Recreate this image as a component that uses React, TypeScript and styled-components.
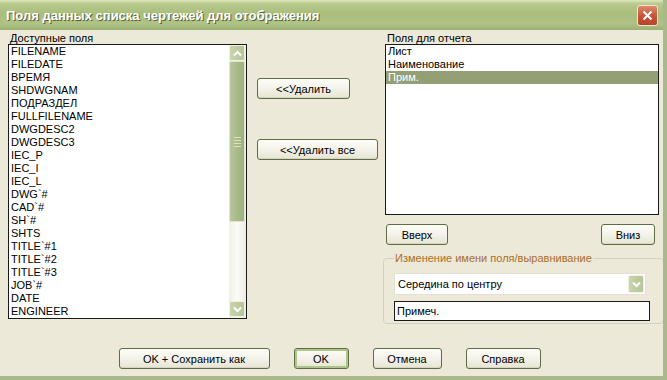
import React from 'react';
import styled, { createGlobalStyle } from 'styled-components';

// Поля, которые можно добавить в отчет
const availableFields = [
  'FILENAME', 'FILEDATE', 'ВРЕМЯ', 'SHDWGNAM', 'ПОДРАЗДЕЛ', 'FULLFILENAME',
  'DWGDESC2', 'DWGDESC3', 'IEC_P', 'IEC_I', 'IEC_L', 'DWG`#', 'CAD`#', 'SH`#',
  'SHTS', 'TITLE`#1', 'TITLE`#2', 'TITLE`#3', 'JOB`#', 'DATE', 'ENGINEER',
];

const reportFields = ['Лист', 'Наименование', 'Прим.'];

const GlobalStyle = createGlobalStyle`
  html, body {
    margin: 0;
    padding: 0;
    background: #ece9d8;
  }
  * {
    box-sizing: border-box;
  }
`;

const Window = styled.div`
  width: 667px;
  height: 380px;
  display: flex;
  flex-direction: column;
  background: #ece9d8;
  border-right: 4px solid #a9b98c;
  border-bottom: 4px solid #a9b98c;
  font-family: 'Liberation Sans', 'Noto Sans', sans-serif;
  font-size: 11px;
  color: #000;
  overflow: hidden;
`;

const TitleBar = styled.div`
  height: 30px;
  flex: none;
  display: flex;
  align-items: center;
  justify-content: space-between;
  padding: 0 5px 0 6px;
  background: linear-gradient(180deg, #dde8bd 0%, #b8ca8c 12%, #a9bd7c 45%, #b0c386 80%, #9cb072 100%);
`;

const Title = styled.span`
  color: #fff;
  font-size: 13px;
  font-weight: bold;
  text-shadow: 1px 1px 0 #55653a;
`;

const CloseButton = styled.div`
  width: 21px;
  height: 21px;
  border-radius: 3px;
  border: 1px solid #f3e3d6;
  background: linear-gradient(180deg, #dc8a6c 0%, #c8563a 50%, #b84428 100%);
  display: flex;
  align-items: center;
  justify-content: center;
`;

const Body = styled.div`
  display: flex;
  padding: 2px 0 0 8px;
`;

const Column = styled.div<{ $width: number }>`
  width: ${p => p.$width}px;
  flex: none;
  display: flex;
  flex-direction: column;
`;

const Label = styled.div`
  height: 12px;
  line-height: 12px;
  padding-left: 2px;
`;

const ListBox = styled.div<{ $height: number }>`
  height: ${p => p.$height}px;
  background: #fff;
  border: 1px solid #1a1a1a;
  display: flex;
  overflow: hidden;
`;

const Items = styled.div`
  flex: 1;
  display: flex;
  flex-direction: column;
`;

const Item = styled.div<{ $selected?: boolean }>`
  height: 13px;
  line-height: 13px;
  padding-left: 2px;
  white-space: nowrap;
  background: ${p => (p.$selected ? '#949f76' : 'transparent')};
  color: ${p => (p.$selected ? '#fff' : '#000')};
`;

const ScrollBar = styled.div`
  width: 17px;
  flex: none;
  display: flex;
  flex-direction: column;
  padding: 0 1px 1px 0;
  background: linear-gradient(90deg, #f1f0e6 0%, #fbfbf7 50%, #eeede2 100%);
`;

const ArrowButton = styled.div`
  width: 16px;
  height: 16px;
  flex: none;
  border: 1px solid #eef2e2;
  border-radius: 2px;
  background: linear-gradient(90deg, #c8d4aa 0%, #b7c598 100%);
  display: flex;
  align-items: center;
  justify-content: center;
`;

const Thumb = styled.div`
  height: 161px;
  border: 1px solid #dfe6cc;
  border-radius: 2px;
  background: linear-gradient(90deg, #b8c79a 0%, #a9b98a 50%, #9fb07e 100%);
  display: flex;
  flex-direction: column;
  align-items: center;
  justify-content: center;
  gap: 2px;
`;

const Grip = styled.div`
  width: 7px;
  height: 1px;
  background: #d9e2c3;
`;

const Track = styled.div`
  flex: 1;
`;

const MiddleColumn = styled(Column)`
  padding: 46px 0 0 10px;
  gap: 40px;
`;

const Button = styled.div<{ $width: number; $default?: boolean }>`
  width: ${p => p.$width}px;
  height: 21px;
  border: 1px solid #5f6c45;
  border-radius: 3px;
  background: linear-gradient(180deg, #fdfdf8 0%, #f4f3ea 50%, #e6e4d3 100%);
  box-shadow: ${p => (p.$default ? 'inset 0 0 0 2px #aec68a' : 'inset 0 -1px 0 #d8d5bf')};
  display: flex;
  align-items: center;
  justify-content: center;
  white-space: nowrap;
`;

const ButtonRow = styled.div`
  display: flex;
  justify-content: space-between;
  margin-top: 9px;
  padding: 0 4px 0 1px;
`;

const GroupBox = styled.fieldset`
  margin: 7px -1px 0 -2px;
  padding: 9px 13px 2px 10px;
  border: 1px solid #d3d2c0;
  border-radius: 4px;
  display: flex;
  flex-direction: column;
  gap: 6px;
`;

const Legend = styled.legend`
  padding: 0 1px;
  margin-left: 0;
  color: #a96d2c;
  line-height: 12px;
`;

const Select = styled.div`
  height: 22px;
  width: 252px;
  background: #fff;
  border: 1px solid #e2e1d3;
  display: flex;
  align-items: center;
  justify-content: space-between;
  padding: 0 1px 0 3px;
`;

const DropButton = styled(ArrowButton)`
  height: 18px;
`;

const TextInput = styled.div`
  height: 20px;
  width: 256px;
  background: #fff;
  border: 1px solid #1a1a1a;
  display: flex;
  align-items: center;
  padding-left: 2px;
`;

const Footer = styled.div`
  margin-top: auto;
  display: flex;
  justify-content: center;
  gap: 24px;
  padding: 0 4px 7px 0;
`;

const Chevron: React.FC<{ up?: boolean }> = ({ up }) => (
  <svg width="9" height="7" viewBox="0 0 9 7">
    <path
      d={up ? 'M1 5.5 L4.5 2 L8 5.5' : 'M1 1.5 L4.5 5 L8 1.5'}
      fill="none"
      stroke="#fff"
      strokeWidth="2"
    />
  </svg>
);

const App: React.FC = () => {
  return (
    <>
      <GlobalStyle />
      <Window>
        <TitleBar>
          <Title>Поля данных списка чертежей для отображения</Title>
          <CloseButton>
            <svg width="11" height="11" viewBox="0 0 11 11">
              <path d="M1.5 1.5 L9.5 9.5 M9.5 1.5 L1.5 9.5" stroke="#fff" strokeWidth="2" />
            </svg>
          </CloseButton>
        </TitleBar>

        <Body>
          <Column $width={239}>
            <Label>Доступные поля</Label>
            <ListBox $height={275}>
              <Items>
                {availableFields.map(f => (
                  <Item key={f}>{f}</Item>
                ))}
              </Items>
              <ScrollBar>
                <ArrowButton>
                  <Chevron up />
                </ArrowButton>
                <Thumb>
                  <Grip />
                  <Grip />
                  <Grip />
                  <Grip />
                </Thumb>
                <Track />
                <ArrowButton>
                  <Chevron />
                </ArrowButton>
              </ScrollBar>
            </ListBox>
          </Column>

          <MiddleColumn $width={138}>
            <Button $width={93}>&lt;&lt;Удалить</Button>
            <Button $width={121}>&lt;&lt;Удалить все</Button>
          </MiddleColumn>

          <Column $width={274}>
            <Label>Поля для отчета</Label>
            <ListBox $height={171}>
              <Items>
                {reportFields.map((f, i) => (
                  <Item key={f} $selected={i === 2}>{f}</Item>
                ))}
              </Items>
            </ListBox>
            <ButtonRow>
              <Button $width={62}>Вверх</Button>
              <Button $width={54}>Вниз</Button>
            </ButtonRow>
            <GroupBox>
              <Legend>Изменение имени поля/выравнивание</Legend>
              <Select>
                <span>Середина по центру</span>
                <DropButton>
                  <Chevron />
                </DropButton>
              </Select>
              <TextInput>Примеч.</TextInput>
            </GroupBox>
          </Column>
        </Body>

        <Footer>
          <Button $width={151}>OK + Сохранить как</Button>
          <Button $width={55} $default>OK</Button>
          <Button $width={69}>Отмена</Button>
          <Button $width={75}>Справка</Button>
        </Footer>
      </Window>
    </>
  );
};

export default App;
